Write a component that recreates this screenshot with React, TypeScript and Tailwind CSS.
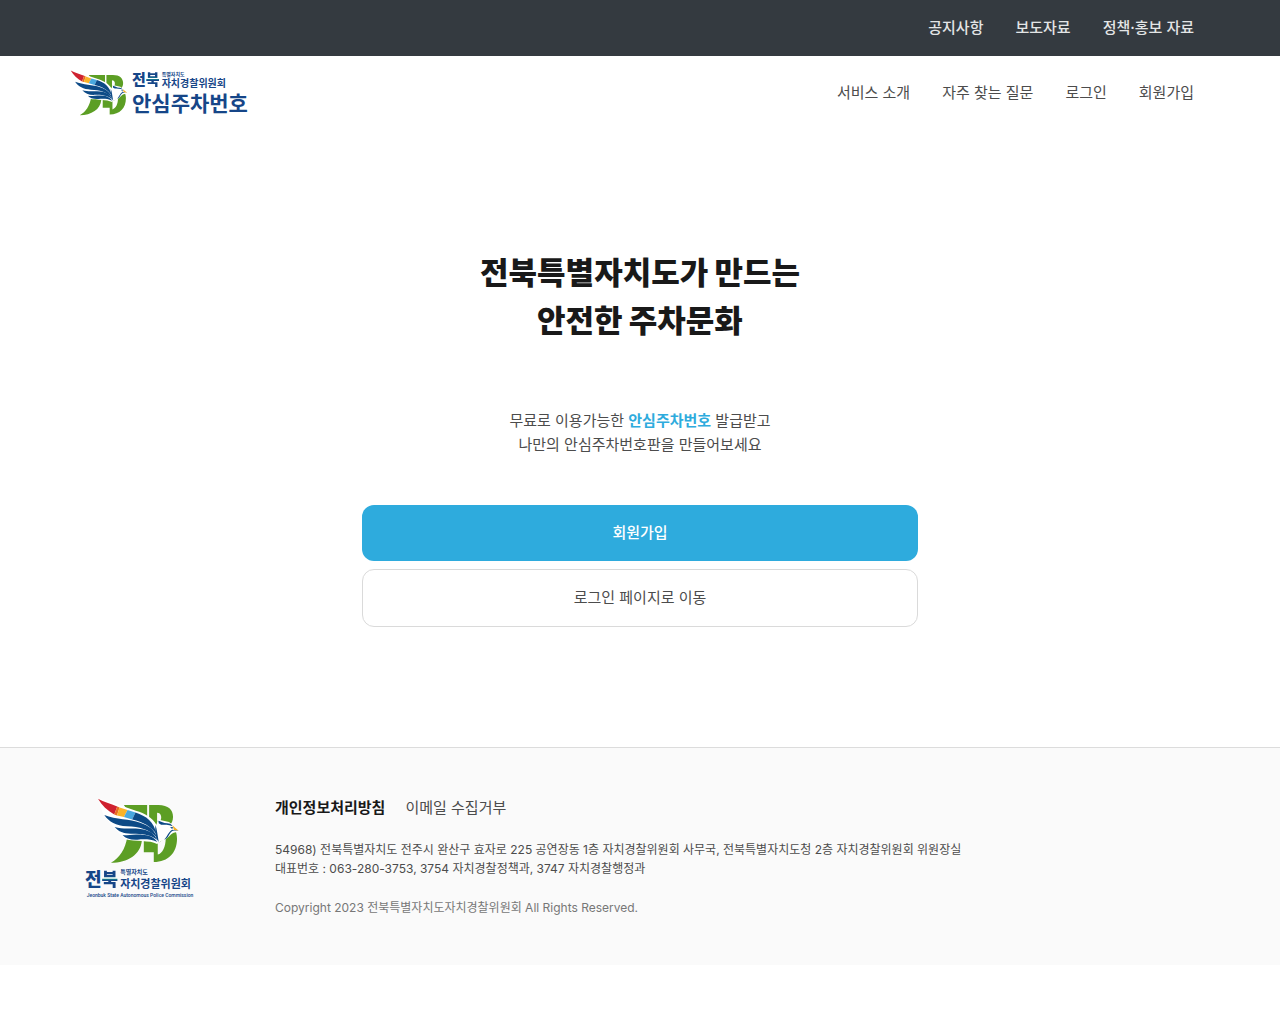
import type React from "react"
import clsx from "clsx"

const topLinks = ["공지사항", "보도자료", "정책·홍보 자료"]
const mainLinks = ["서비스 소개", "자주 찾는 질문", "로그인", "회원가입"]

const Emblem: React.FC<{ className?: string }> = ({ className }) => (
  <svg viewBox="55 24 250 198" className={clsx("shrink-0", className)} aria-hidden="true">
    {/* J */}
    <path fill="#5c9e24" d="M136 45H206V130L190 152C186 194 148 218 97 219C124 203 140 178 146 142L186 120Z" />
    {/* B */}
    <path
      fill="#5c9e24"
      fillRule="evenodd"
      d="M212 45H240C270 45 284 60 284 80C284 92 280 100 272 108C288 113 296 124 296 146C296 188 270 216 226 216V187H196V140L212 120V45ZM236 68V92H246C251 84 249 68 236 68ZM238 160V194C252 190 262 172 262 144Z"
    />
    {/* white outline that separates the bird from the letters */}
    <path
      fill="#fff"
      d="M58 24L120 44L172 62C200 70 222 84 234 104L238 88L272 96L305 124L286 128C274 132 268 150 248 153L236 162C214 150 170 156 140 148L104 112L74 74Z"
    />
    {/* coloured top feather */}
    <path fill="#cf2230" d="M58 26C76 37 95 40 116 49L107 73C86 62 70 46 58 26Z" />
    <path fill="#e96d20" d="M116 49L123 52L115 76L107 73Z" />
    <path fill="#f9b328" d="M123 52L147 60L136 81L115 76Z" />
    <path fill="#49a8df" d="M147 60L171 67L161 88L136 81Z" />
    <path fill="#0d4a86" d="M171 67C204 78 226 94 235 133C216 108 195 96 161 88Z" />
    {/* blue feathers */}
    <path fill="#0d4a86" d="M77 75C112 89 154 87 185 98C212 107 228 119 236 143C210 117 184 111 145 109C112 107 91 96 77 75Z" />
    <path fill="#0d4a86" d="M108 111C134 119 157 113 186 117C211 120 228 130 236 149C215 133 189 131 162 131C137 132 121 126 108 111Z" />
    <path fill="#0d4a86" d="M132 135C150 138 166 133 190 134C211 135 226 140 237 156C213 146 195 148 177 149C156 150 142 146 132 135Z" />
    {/* head */}
    <path fill="#0d4a86" d="M240 92C249 94 255 100 266 100C273 100 278 102 283 109C270 103 257 105 248 104L241 100Z" />
    <path fill="#0d4a86" d="M275 111L285 112L281 117Z" />
    <path fill="#f3ae25" d="M282 106L301 122L287 120Z" />
    <path fill="#0d4a86" d="M301 122C287 119 280 123 275 130C269 140 266 147 257 149C267 141 270 124 282 119Z" />
    <path fill="#0d4a86" d="M231 105C236 119 237 134 241 156L234 146C230 132 230 120 231 105Z" />
  </svg>
)

const Jeonbuk: React.FC<{ className?: string }> = ({ className }) => (
  <span className={clsx("font-black", className)}>
    전
    <span className="bg-gradient-to-b from-[#164688] from-35% via-[#1f9c8d] via-45% to-[#164688] to-55% bg-clip-text text-transparent">
      북
    </span>
  </span>
)

const HeaderLogo: React.FC = () => (
  <a href="/" aria-label="전북 자치경찰위원회 안심주차번호" className="flex items-center gap-1 text-[#164688]">
    <Emblem className="h-[46px] w-[58px]" />
    <span className="block font-bold">
      <span className="flex items-end gap-0.5">
        <Jeonbuk className="text-[15px] leading-5" />
        <span className="flex flex-col pb-px whitespace-nowrap">
          <span className="text-[5px] leading-[6px]">특별자치도</span>
          <span className="text-[10px] leading-3">자치경찰위원회</span>
        </span>
      </span>
      <span className="mt-0.5 block text-[21px] leading-6 whitespace-nowrap">안심주차번호</span>
    </span>
  </a>
)

const FooterLogo: React.FC = () => (
  <a href="/" aria-label="전북 자치경찰위원회" className="flex w-[110px] flex-col text-[#164688]">
    <Emblem className="ml-3 h-[66px] w-[83px]" />
    <span className="mt-1 flex items-end gap-0.5 font-bold whitespace-nowrap">
      <Jeonbuk className="text-[18px] leading-6" />
      <span className="flex flex-col">
        <span className="text-[6px] leading-2">특별자치도</span>
        <span className="text-[11px] leading-4">자치경찰위원회</span>
      </span>
    </span>
    <span className="text-center font-[Roboto,sans-serif] text-[5px] leading-[6px] font-medium whitespace-nowrap">
      Jeonbuk State Autonomous Police Commission
    </span>
  </a>
)

const NavLinks: React.FC<{ items: string[]; className?: string }> = ({ items, className }) => (
  <ul className={clsx("flex flex-wrap justify-end", className)}>
    {items.map((item) => (
      <li key={item}>
        <a href="/" className="block px-4 py-2 hover:underline">
          {item}
        </a>
      </li>
    ))}
  </ul>
)

const App: React.FC = () => {
  return (
    <div className="bg-white font-[Inter,'Noto_Sans_CJK_KR',sans-serif] text-[15px] leading-6 text-[#4c4c4c]">
      <nav className="bg-[#343a40] text-[#e3e5e6]" aria-label="소식">
        <div className="mx-auto flex h-14 max-w-[1140px] items-center justify-end">
          <NavLinks items={topLinks} className="font-medium" />
        </div>
      </nav>

      <header className="mx-auto flex h-[73px] max-w-[1140px] items-center justify-between">
        <HeaderLogo />
        <nav aria-label="주 메뉴">
          <NavLinks items={mainLinks} />
        </nav>
      </header>

      <main className="mx-auto max-w-[556px] pt-[120px] pb-[120px] text-center">
        <h1 className="text-[31px] leading-12 font-black text-[#191919]">
          전북특별자치도가 만드는
          <br />
          안전한 주차문화
        </h1>
        <p className="mt-16">
          무료로 이용가능한 <strong className="font-bold text-[#2eabdd]">안심주차번호</strong> 발급받고
          <br />
          나만의 안심주차번호판을 만들어보세요
        </p>
        <div className="mt-12 flex flex-col gap-2">
          <button type="button" className="h-14 rounded-xl bg-[#2eabdd] font-medium text-white">
            회원가입
          </button>
          <button type="button" className="h-[58px] rounded-xl border border-[#dadada] bg-white">
            로그인 페이지로 이동
          </button>
        </div>
      </main>

      <footer className="border-t border-[#dcdcdc] bg-[#fafafa] pt-12 pb-12">
        <div className="mx-auto flex max-w-[1140px] px-[15px]">
          <div className="w-[190px] shrink-0 pt-0.5">
            <FooterLogo />
          </div>
          <div className="text-xs leading-[19px]">
            <ul className="flex gap-5 text-[15px] leading-6">
              <li>
                <a href="/" className="font-bold text-[#191919]">
                  개인정보처리방침
                </a>
              </li>
              <li>
                <a href="/">이메일 수집거부</a>
              </li>
            </ul>
            <address className="mt-5 not-italic">
              54968) 전북특별자치도 전주시 완산구 효자로 225 공연장동 1층 자치경찰위원회 사무국, 전북특별자치도청 2층 자치경찰위원회 위원장실
              <br />
              대표번호 : 063-280-3753, 3754 자치경찰정책과, 3747 자치경찰행정과
            </address>
            <p className="mt-5 text-[#777]">Copyright 2023 전북특별자치도자치경찰위원회 All Rights Reserved.</p>
          </div>
        </div>
      </footer>
    </div>
  )
}

export default App
